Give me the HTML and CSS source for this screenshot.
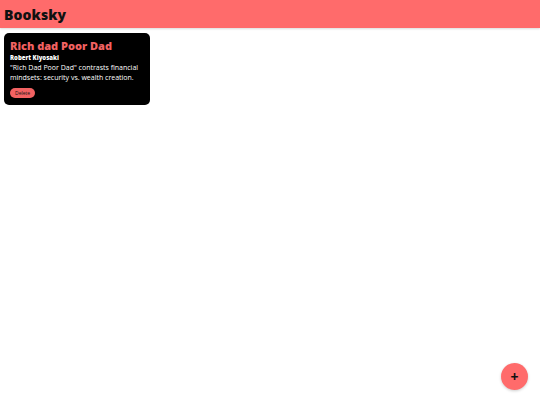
FILE: index.html
```html
<!DOCTYPE html>
<html>
<head>
<meta charset="utf-8">
<link rel="stylesheet" href="styles.css">
</head>
<body>
<header class="topbar"><h1 class="brand">Booksky</h1></header>
<main class="books">
  <article class="card">
    <h2 class="card-title">Rich dad Poor Dad</h2>
    <p class="card-author">Robert Kiyosaki</p>
    <p class="card-desc">"Rich Dad Poor Dad" contrasts financial mindsets: security vs. wealth creation.</p>
    <button class="btn-delete">Delete</button>
  </article>
</main>
<button class="fab">+</button>
</body>
</html>
```
FILE: styles.css
```css
* { box-sizing: border-box; }
body {
  margin: 0;
  font-family: "Open Sans", "DejaVu Sans", sans-serif;
  background: #fff;
  width: 540px;
  height: 405px;
  position: relative;
  overflow: hidden;
}
.topbar {
  height: 28px;
  background: #ff6b6b;
  display: flex;
  align-items: center;
  padding: 0 4px;
  box-shadow: 0 1px 2px rgba(0,0,0,0.15);
}
.brand {
  margin: 0;
  font-size: 14px;
  font-weight: 800;
  color: #111;
  letter-spacing: 0.1px;
}
.books {
  display: flex;
  flex-wrap: wrap;
  padding: 5px 4px;
}
.card {
  width: 146px;
  background: #000;
  border-radius: 5px;
  padding: 5px 6px 7px;
  color: #fff;
}
.card-title {
  margin: 0;
  font-size: 11px;
  font-weight: 800;
  color: #f26262;
  line-height: 16px;
}
.card-author {
  margin: 0;
  font-size: 6px;
  font-weight: 800;
  line-height: 8px;
}
.card-desc {
  margin: 1px 0 0;
  font-size: 7px;
  line-height: 10px;
  color: #fff;
}
.btn-delete {
  display: block;
  margin-top: 5px;
  height: 10px;
  background: #f26262;
  border: none;
  border-radius: 5px;
  font-family: inherit;
  font-size: 5px;
  color: #111;
  padding: 0 5px;
  line-height: 10px;
}
.fab {
  position: absolute;
  right: 12px;
  bottom: 15px;
  width: 27px;
  height: 27px;
  border-radius: 50%;
  border: none;
  background: #ff6b6b;
  color: #111;
  font-family: inherit;
  font-weight: 700;
  font-size: 14px;
  line-height: 1;
  padding: 0;
  box-shadow: 0 1px 3px rgba(0,0,0,0.2);
}
```
